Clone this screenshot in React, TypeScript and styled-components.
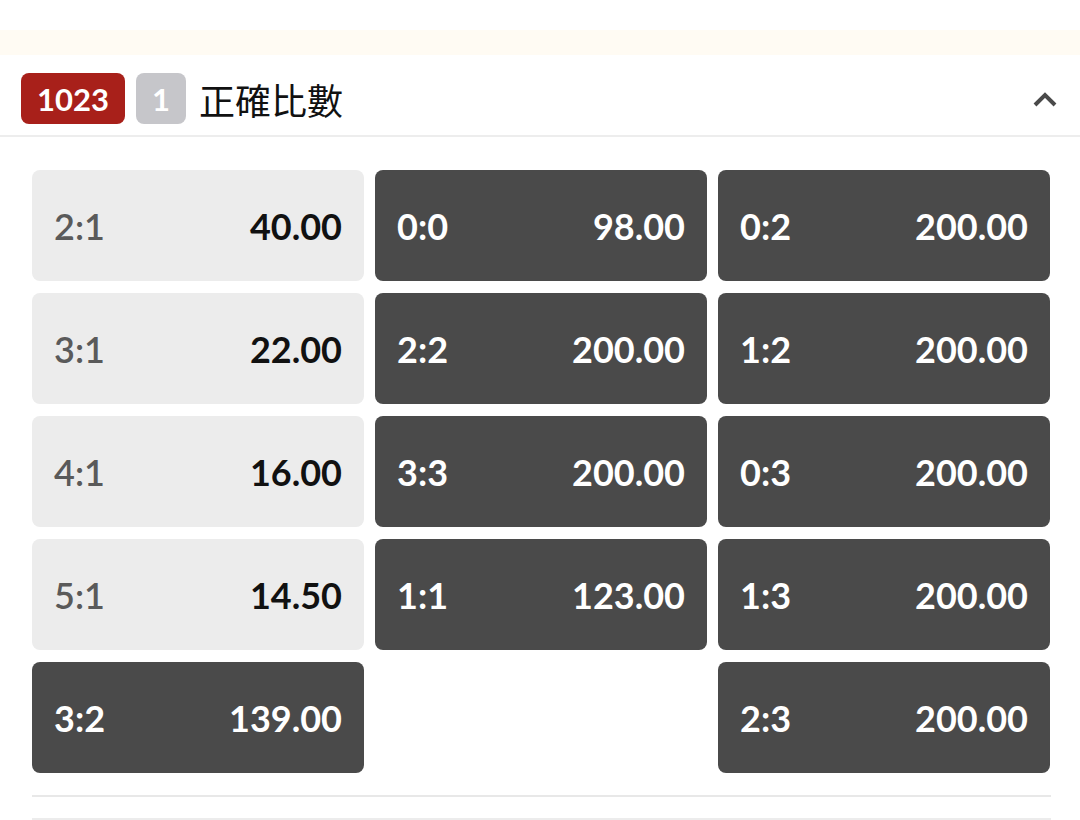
import React from 'react'
import styled, { createGlobalStyle } from 'styled-components'

const GlobalStyle = createGlobalStyle`
  html, body {
    margin: 0;
    padding: 0;
    background: #fff;
    font-family: Lato, "Noto Sans", "Noto Sans CJK TC", sans-serif;
  }
`

const TopGap = styled.div`
  height: 30px;
  background: #fff;
`

const NoticeBand = styled.div`
  height: 25px;
  background: #fffbf3;
`

const Header = styled.div`
  display: flex;
  align-items: center;
  height: 82px;
  box-sizing: border-box;
  padding: 7px 21px 0;
  border-bottom: 2px solid #ededed;
`

const Badge = styled.span<{ $tone: 'red' | 'grey' }>`
  display: inline-flex;
  align-items: center;
  justify-content: center;
  height: 51px;
  min-width: 50px;
  padding: 0 ${p => (p.$tone === 'red' ? '16px' : '0')};
  box-sizing: border-box;
  border-radius: 8px;
  background: ${p => (p.$tone === 'red' ? '#a8201a' : '#c6c6ca')};
  color: #fff;
  font-family: Lato, sans-serif;
  font-weight: 700;
  font-size: 31px;
  margin-right: 11px;
`

const Title = styled.div`
  flex: 1;
  font-family: "Noto Sans CJK TC", "Noto Sans CJK SC", sans-serif;
  font-size: 36px;
  color: #111;
  margin-left: 2px;
  line-height: 1;
`

const Toggle = styled.button`
  border: 0;
  background: none;
  padding: 0;
  margin-right: 1px;
  display: flex;
  cursor: pointer;
`

const Board = styled.div`
  display: grid;
  grid-template-columns: repeat(3, 332px);
  gap: 11px;
  padding: 33px 29px 0 32px;
`

const Column = styled.div`
  display: flex;
  flex-direction: column;
  gap: 12px;
`

const Cell = styled.div<{ $dark: boolean }>`
  display: flex;
  align-items: center;
  justify-content: space-between;
  height: 111px;
  padding: 0 22px;
  border-radius: 8px;
  background: ${p => (p.$dark ? '#4a4a4a' : '#ececec')};
  font-family: Lato, sans-serif;
  font-size: 36px;
  line-height: 1;
`

const Score = styled.span<{ $dark: boolean }>`
  font-weight: ${p => (p.$dark ? 700 : 600)};
  color: ${p => (p.$dark ? '#fff' : '#5a5a5a')};
`

const Odds = styled.span<{ $dark: boolean }>`
  font-weight: 700;
  color: ${p => (p.$dark ? '#fff' : '#111')};
`

const Divider = styled.div`
  margin: 22px 29px 0 32px;
  border-top: 2px solid #e8e8e8;
  height: 21px;
`

const NextBlock = styled.div`
  margin: 0 29px 0 32px;
  border-top: 2px solid #ececec;
  height: 20px;
`

type Pick = { score: string; odds: string; dark: boolean }

const columns: Pick[][] = [
  [
    { score: '2:1', odds: '40.00', dark: false },
    { score: '3:1', odds: '22.00', dark: false },
    { score: '4:1', odds: '16.00', dark: false },
    { score: '5:1', odds: '14.50', dark: false },
    { score: '3:2', odds: '139.00', dark: true },
  ],
  [
    { score: '0:0', odds: '98.00', dark: true },
    { score: '2:2', odds: '200.00', dark: true },
    { score: '3:3', odds: '200.00', dark: true },
    { score: '1:1', odds: '123.00', dark: true },
  ],
  [
    { score: '0:2', odds: '200.00', dark: true },
    { score: '1:2', odds: '200.00', dark: true },
    { score: '0:3', odds: '200.00', dark: true },
    { score: '1:3', odds: '200.00', dark: true },
    { score: '2:3', odds: '200.00', dark: true },
  ],
]

export default function App() {
  return (
    <>
      <GlobalStyle />
      <TopGap />
      <NoticeBand />
      <Header>
        <Badge $tone="red">1023</Badge>
        <Badge $tone="grey">1</Badge>
        <Title>正確比數</Title>
        <Toggle aria-label="collapse">
          <svg width="26" height="18" viewBox="0 0 26 18">
            <polyline points="3,15 13,5 23,15" fill="none" stroke="#4a4a4a" strokeWidth="4" />
          </svg>
        </Toggle>
      </Header>
      <Board>
        {columns.map((col, i) => (
          <Column key={i}>
            {col.map(p => (
              <Cell key={p.score} $dark={p.dark}>
                <Score $dark={p.dark}>{p.score}</Score>
                <Odds $dark={p.dark}>{p.odds}</Odds>
              </Cell>
            ))}
          </Column>
        ))}
      </Board>
      <Divider />
      <NextBlock />
    </>
  )
}
